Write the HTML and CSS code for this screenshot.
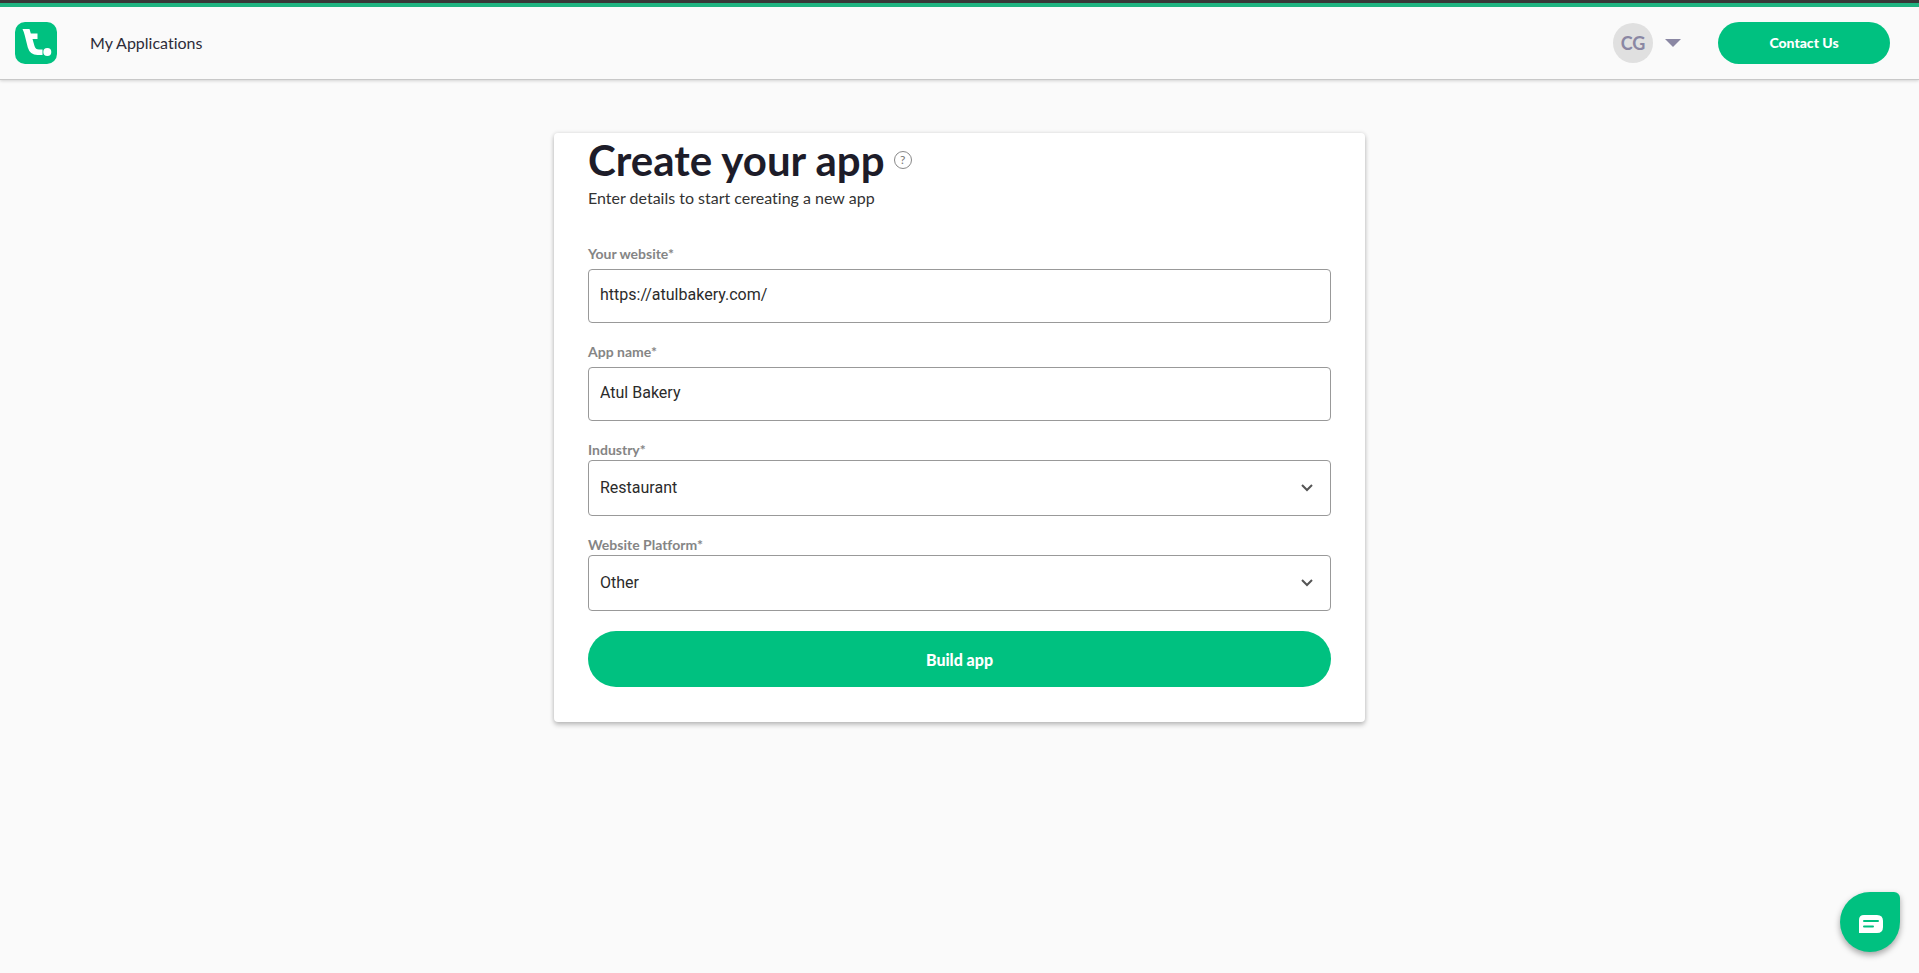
FILE: index.html
```html
<!DOCTYPE html>
<html lang="en">
<head>
<meta charset="utf-8">
<meta name="viewport" content="width=device-width, initial-scale=1">
<title>Create your app</title>
<link rel="stylesheet" href="styles.css">
</head>
<body>
<header class="header">
  <a class="logo" href="#" aria-label="Home">
    <svg viewBox="0 0 42 42" width="42" height="42" aria-hidden="true">
      <rect width="42" height="42" rx="10" fill="#00c180"/>
      <path d="M7.500 7H14.500L15.800 11.500H22.500V17H17.500L19.500 24Q20.500 27.500 24 27.500H27.500V33H22.500Q15 33 12.800 25.500L9.800 13.500Q9.200 10.500 7.500 7Z" fill="#fff"/>
      <circle cx="32.300" cy="30" r="4" fill="#fff"/>
    </svg>
  </a>
  <nav class="nav"><a class="nav-link" href="#">My Applications</a></nav>
  <button class="account" type="button" aria-label="Account menu">
    <span class="avatar">CG</span>
    <svg class="caret" viewBox="0 0 16 8" width="16" height="8" aria-hidden="true"><path d="M0 0H16L8 8Z" fill="#8a87a3"/></svg>
  </button>
  <button class="contact" type="button">Contact Us</button>
</header>
<main class="main">
  <form class="card">
    <div class="heading">
      <h1 class="title">Create your app</h1>
      <button class="help" type="button" aria-label="Help">?</button>
    </div>
    <p class="subtitle">Enter details to start cereating a new app</p>
    <div class="field field-text">
      <label class="label" for="website">Your website*</label>
      <input class="control" id="website" type="text" value="https://atulbakery.com/">
    </div>
    <div class="field field-text">
      <label class="label" for="name">App name*</label>
      <input class="control" id="name" type="text" value="Atul Bakery">
    </div>
    <div class="field">
      <label class="label" for="industry">Industry*</label>
      <div class="select-wrap">
        <select class="control select" id="industry"><option>Restaurant</option></select>
        <svg class="chevron" viewBox="0 0 12 8" width="12" height="8" aria-hidden="true"><path d="M1 1L6 6L11 1" fill="none" stroke="#555" stroke-width="2"/></svg>
      </div>
    </div>
    <div class="field">
      <label class="label" for="platform">Website Platform*</label>
      <div class="select-wrap">
        <select class="control select" id="platform"><option>Other</option></select>
        <svg class="chevron" viewBox="0 0 12 8" width="12" height="8" aria-hidden="true"><path d="M1 1L6 6L11 1" fill="none" stroke="#555" stroke-width="2"/></svg>
      </div>
    </div>
    <button class="build" type="submit">Build app</button>
  </form>
</main>
<button class="chat" type="button" aria-label="Open chat">
  <svg viewBox="0 0 24 18" width="24" height="18" aria-hidden="true">
    <path d="M5 0H18Q24 0 24 6V12Q24 18 18 18H0V5Q0 0 5 0Z" fill="#fff"/>
    <path d="M5 6H19M5 11.500H14" stroke="#00c180" stroke-width="2" stroke-linecap="round"/>
  </svg>
</button>
</body>
</html>
```

FILE: styles.css
```css
* { box-sizing: border-box; }

body {
  margin: 0;
  min-height: 100vh;
  background: #fafafa;
  color: #1d1c29;
  font-family: Lato, "Open Sans", sans-serif;
  font-size: 16px;
  font-variant-ligatures: none;
}

button { font-family: inherit; border: 0; cursor: pointer; }

.header {
  display: flex;
  align-items: center;
  height: 80px;
  padding: 7px 29px 1px 15px;
  background: linear-gradient(#373737 3px, #1fb380 3px, #1fb380 7px, #fafafa 7px);
  border-bottom: 1px solid #c8c8c8;
  box-shadow: 0 1px 3px rgba(0, 0, 0, 0.16);
}

.logo { display: flex; }
.nav { flex: 1; padding-left: 33px; }
.nav-link { color: #2d2c39; font-size: 16px; text-decoration: none; }

.account {
  display: flex;
  align-items: center;
  gap: 12px;
  margin-right: 37px;
  padding: 0;
  background: none;
}

.avatar {
  width: 40px;
  border-radius: 50%;
  background: #e0e0e0;
  color: #8a87a3;
  font-size: 18px;
  font-weight: 700;
  line-height: 40px;
  text-align: center;
}

.contact {
  width: 172px;
  height: 42px;
  border-radius: 21px;
  background: #00c180;
  color: #fff;
  font-size: 14px;
  font-weight: 900;
}

.main { padding: 53px 24px; }

.card {
  max-width: 811px;
  margin: 0 auto;
  padding: 0 34px 35px;
  border-radius: 4px;
  background: #fff;
  box-shadow: 0 3px 5px rgba(0, 0, 0, 0.22), 0 0 4px rgba(0, 0, 0, 0.12);
}

.heading { display: flex; align-items: center; gap: 9px; }
.title { margin: 0; font-size: 42px; line-height: 54px; font-weight: 700; }

.help {
  width: 18px;
  height: 18px;
  padding: 0;
  border: 1px solid #888;
  border-radius: 50%;
  background: none;
  color: #777;
  font-size: 12px;
  line-height: 16px;
}

.subtitle { margin: 0 0 36px; font-size: 16px; line-height: 21px; color: #333; }

.field { display: flex; flex-direction: column; margin-bottom: 19px; }
.field-text { gap: 5px; }
.label { color: #858585; font-size: 14px; font-weight: 700; line-height: 20px; }

.control {
  width: 100%;
  height: 54px;
  padding: 0 11px 4px;
  border: 1px solid #999;
  border-radius: 4px;
  background: #fff;
  color: #2b2b2b;
  font-family: Roboto, sans-serif;
  font-size: 16px;
}

.select-wrap { display: grid; align-items: center; }
.select { grid-area: 1 / 1; height: 56px; padding: 0 40px 2px 11px; appearance: none; }
.chevron { grid-area: 1 / 1; justify-self: end; margin-right: 18px; pointer-events: none; }

.build {
  width: 100%;
  height: 56px;
  margin-top: 1px;
  border-radius: 28px;
  background: #00c180;
  color: #fff;
  font-size: 16px;
  font-weight: 900;
}

.chat {
  position: fixed;
  right: 19px;
  bottom: 21px;
  display: flex;
  align-items: center;
  justify-content: center;
  width: 60px;
  height: 60px;
  padding: 4px 0 0 2px;
  border-radius: 30px 6px 30px 30px;
  background: #00c180;
  box-shadow: 0 3px 6px rgba(0, 0, 0, 0.35);
}
```
